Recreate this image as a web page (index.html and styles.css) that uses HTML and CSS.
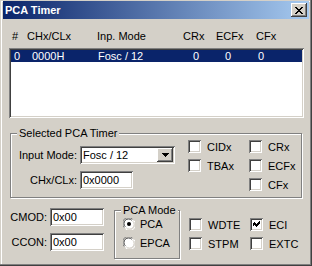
FILE: index.html
```html
<!DOCTYPE html>
<html lang="en">
<head>
    <meta charset="UTF-8">
    <title>PCA Timer</title>
    <link rel="stylesheet" href="styles.css">
</head>
<body>

<div class="window">
    <!-- title bar -->
    <div class="titlebar">
        <span class="title">PCA Timer</span>
        <span class="close-btn">
            <svg width="8" height="7" viewBox="0 0 8 7" shape-rendering="crispEdges">
                <path d="M0 0h2v1h-2zM6 0h2v1h-2zM1 1h2v1h-2zM5 1h2v1h-2zM2 2h4v1h-4zM3 3h2v1h-2zM2 4h4v1h-4zM1 5h2v1h-2zM5 5h2v1h-2zM0 6h2v1h-2zM6 6h2v1h-2z" fill="#000"/>
            </svg>
        </span>
    </div>

    <!-- timer list -->
    <div class="list-head">
        <span>#</span>
        <span>CHx/CLx</span>
        <span>Inp. Mode</span>
        <span>CRx</span>
        <span>ECFx</span>
        <span>CFx</span>
    </div>
    <div class="listbox">
        <div class="list-row selected">
            <span>0</span>
            <span>0000H</span>
            <span>Fosc / 12</span>
            <span>0</span>
            <span>0</span>
            <span>0</span>
        </div>
    </div>

    <!-- selected timer -->
    <fieldset class="group timer-group">
        <legend>Selected PCA Timer</legend>
        <div class="timer-body">
            <div class="timer-fields">
                <div class="field-row">
                    <span class="field-label">Input Mode:</span>
                    <span class="combo">
                        <span class="combo-text">Fosc / 12</span>
                        <span class="combo-btn">
                            <svg width="7" height="4" viewBox="0 0 7 4" shape-rendering="crispEdges">
                                <path d="M0 0h7v1h-7zM1 1h5v1h-5zM2 2h3v1h-3zM3 3h1v1h-1z" fill="#000"/>
                            </svg>
                        </span>
                    </span>
                </div>
                <div class="field-row">
                    <span class="field-label">CHx/CLx:</span>
                    <span class="edit chx-edit">0x0000</span>
                </div>
            </div>
            <div class="check-grid timer-checks">
                <div class="check"><span class="check-box"></span>CIDx</div>
                <div class="check"><span class="check-box"></span>CRx</div>
                <div class="check"><span class="check-box"></span>TBAx</div>
                <div class="check"><span class="check-box"></span>ECFx</div>
                <div class="check"></div>
                <div class="check"><span class="check-box"></span>CFx</div>
            </div>
        </div>
    </fieldset>

    <!-- registers -->
    <div class="bottom-row">
        <div class="reg-fields">
            <div class="field-row">
                <span class="field-label reg-label">CMOD:</span>
                <span class="edit reg-edit">0x00</span>
            </div>
            <div class="field-row">
                <span class="field-label reg-label">CCON:</span>
                <span class="edit reg-edit">0x00</span>
            </div>
        </div>

        <fieldset class="group mode-group">
            <legend>PCA Mode</legend>
            <div class="radio">
                <svg class="radio-dot" width="12" height="12" viewBox="0 0 12 12">
                    <circle cx="6" cy="6" r="5.5" fill="#fff"/>
                    <path d="M1.2 9.5A5.5 5.5 0 0 1 9.5 1.2" stroke="#808080" fill="none"/>
                    <path d="M2.3 8.8A4.4 4.4 0 0 1 8.8 2.3" stroke="#404040" fill="none"/>
                    <path d="M10.8 2.5A5.5 5.5 0 0 1 2.5 10.8" stroke="#fff" fill="none"/>
                    <path d="M9.7 3.2A4.4 4.4 0 0 1 3.2 9.7" stroke="#d4d0c8" fill="none"/>
                    <circle cx="6" cy="6" r="2" fill="#000"/>
                </svg>
                PCA
            </div>
            <div class="radio">
                <svg class="radio-dot" width="12" height="12" viewBox="0 0 12 12">
                    <circle cx="6" cy="6" r="5.5" fill="#fff"/>
                    <path d="M1.2 9.5A5.5 5.5 0 0 1 9.5 1.2" stroke="#808080" fill="none"/>
                    <path d="M2.3 8.8A4.4 4.4 0 0 1 8.8 2.3" stroke="#404040" fill="none"/>
                    <path d="M10.8 2.5A5.5 5.5 0 0 1 2.5 10.8" stroke="#fff" fill="none"/>
                    <path d="M9.7 3.2A4.4 4.4 0 0 1 3.2 9.7" stroke="#d4d0c8" fill="none"/>
                </svg>
                EPCA
            </div>
        </fieldset>

        <div class="check-grid mode-checks">
            <div class="check"><span class="check-box"></span>WDTE</div>
            <div class="check">
                <span class="check-box">
                    <svg width="7" height="7" viewBox="0 0 7 7" shape-rendering="crispEdges">
                        <path d="M6 0h1v3h-1zM5 1h1v3h-1zM4 2h1v3h-1zM3 3h1v3h-1zM2 2h1v3h-1zM1 1h1v3h-1zM0 2h1v3h-1z" fill="#000"/>
                    </svg>
                </span>ECI
            </div>
            <div class="check"><span class="check-box"></span>STPM</div>
            <div class="check"><span class="check-box"></span>EXTC</div>
        </div>
    </div>
</div>

</body>
</html>
```

FILE: styles.css
```css
body {
    margin: 0;
    padding: 0;
    font-family: "Liberation Sans", Arial, sans-serif;
    font-size: 11px;
    color: #000;
    background: #d4d0c8;
}

.window {
    width: 312px;
    height: 266px;
    box-sizing: border-box;
    padding: 1px 3px 3px 3px;
    background: #d4d0c8;
    box-shadow: inset -1px -1px #404040, inset -2px -2px #808080,
                inset 1px 1px #d4d0c8, inset 2px 2px #fff;
    overflow: hidden;
}

/* 标题栏 */
.titlebar {
    height: 18px;
    display: flex;
    align-items: center;
    justify-content: space-between;
    background: linear-gradient(to right, #0a246a, #a6caf0);
    padding: 0 2px;
}

.title {
    color: #fff;
    font-weight: bold;
    font-size: 11px;
}

.close-btn {
    width: 16px;
    height: 14px;
    display: flex;
    align-items: center;
    justify-content: center;
    background: #d4d0c8;
    box-shadow: inset -1px -1px #404040, inset 1px 1px #fff,
                inset -2px -2px #808080, inset 2px 2px #d4d0c8;
}

/* 列表 */
.list-head {
    display: grid;
    grid-template-columns: 15px 70px 86px 33px 40px auto;
    margin-top: 11px;
    padding-left: 9px;
    line-height: 13px;
}

.listbox {
    width: 295px;
    height: 70px;
    box-sizing: border-box;
    margin: 5px 0 0 6px;
    padding: 2px;
    background: #fff;
    box-shadow: inset 1px 1px #808080, inset -1px -1px #fff,
                inset 2px 2px #404040, inset -2px -2px #d4d0c8;
}

.list-row {
    display: grid;
    grid-template-columns: 18px 66px 95px 32px 33px auto;
    height: 12px;
    line-height: 12px;
    padding-left: 3px;
}

.list-row.selected {
    background: #0a246a;
    color: #fff;
}

/* 分组框 */
.group {
    margin: 0;
    padding: 0;
    border: 1px solid #808080;
    box-shadow: inset 1px 1px #fff, 1px 1px #fff;
    box-sizing: border-box;
    min-width: 0;
}

.group legend {
    margin-left: 6px;
    padding: 0 2px;
    line-height: 13px;
    white-space: nowrap;
    background: #d4d0c8;
}

.timer-group {
    width: 292px;
    height: 71px;
    margin: 9px 0 0 7px;
}

.timer-body {
    display: flex;
}

.timer-fields {
    display: flex;
    flex-direction: column;
    gap: 7px;
    padding-top: 6px;
}

.field-row {
    display: flex;
    align-items: center;
    gap: 3px;
}

.field-label {
    width: 66px;
    text-align: right;
}

.edit {
    height: 18px;
    box-sizing: border-box;
    padding: 0 3px;
    line-height: 18px;
    background: #fff;
    box-shadow: inset 1px 1px #808080, inset -1px -1px #fff,
                inset 2px 2px #404040, inset -2px -2px #d4d0c8;
}

.chx-edit {
    width: 53px;
}

.combo {
    width: 95px;
    height: 18px;
    box-sizing: border-box;
    padding: 2px;
    display: flex;
    background: #fff;
    box-shadow: inset 1px 1px #808080, inset -1px -1px #fff,
                inset 2px 2px #404040, inset -2px -2px #d4d0c8;
}

.combo-text {
    flex: 1;
    padding-left: 1px;
    line-height: 14px;
}

.combo-btn {
    width: 16px;
    height: 14px;
    display: flex;
    align-items: center;
    justify-content: center;
    background: #d4d0c8;
    box-shadow: inset -1px -1px #404040, inset 1px 1px #fff,
                inset -2px -2px #808080, inset 2px 2px #d4d0c8;
}

/* 复选框 */
.check-grid {
    display: grid;
    grid-template-columns: 61px auto;
    row-gap: 6px;
}

.timer-checks {
    margin-left: 13px;
}

.check {
    display: flex;
    align-items: center;
    gap: 6px;
    height: 13px;
}

.check-box {
    width: 13px;
    height: 13px;
    box-sizing: border-box;
    display: flex;
    align-items: center;
    justify-content: center;
    background: #fff;
    box-shadow: inset 1px 1px #808080, inset -1px -1px #fff,
                inset 2px 2px #404040, inset -2px -2px #d4d0c8;
}

/* 底部寄存器 */
.bottom-row {
    display: flex;
    align-items: flex-start;
    margin-top: 6px;
}

.reg-fields {
    display: flex;
    flex-direction: column;
    gap: 7px;
    padding-top: 4px;
}

.reg-label {
    width: 44px;
}

.reg-edit {
    width: 54px;
}

.mode-group {
    width: 66px;
    height: 55px;
    margin-left: 10px;
    padding-top: 1px;
}

.radio {
    display: flex;
    align-items: center;
    gap: 5px;
    height: 12px;
    margin: 0 0 7px 8px;
}

.mode-checks {
    margin: 14px 0 0 9px;
}
```
